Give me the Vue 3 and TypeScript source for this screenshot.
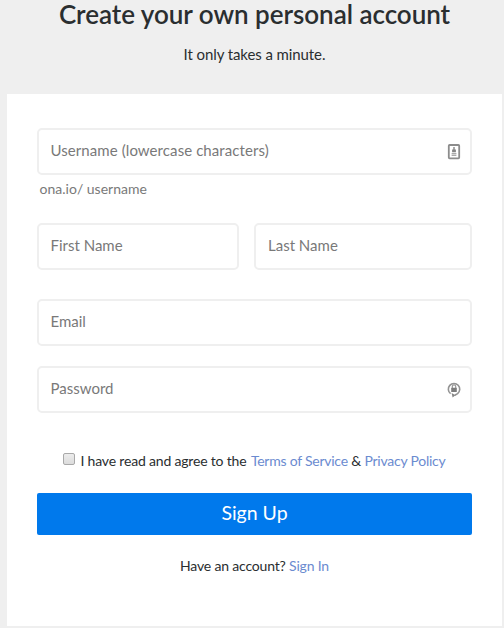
<script setup lang="ts">
import { reactive } from 'vue'

const form = reactive({
  username: '',
  firstName: '',
  lastName: '',
  email: '',
  password: '',
  agreed: false,
})
</script>

<template>
  <main class="page">
    <header class="intro">
      <h1 class="title">Create your own personal account</h1>
      <p class="subtitle">It only takes a minute.</p>
    </header>

    <form class="card" @submit.prevent>
      <div class="field">
        <input v-model="form.username" class="input wide" type="text" placeholder="Username (lowercase characters)" />
        <svg class="field-icon" viewBox="0 0 14 18" aria-hidden="true">
          <rect x="1.8" y="2" width="10.4" height="13.4" rx="0.8" fill="#fff" stroke="#8c8c8c" stroke-width="1.8" />
          <path d="M6.3 4h1.4v2.6h1.2v2.6H5.1V6.6h1.2z" fill="#858585" />
          <path d="M4.6 10.6h4.8M4.6 12.4h4.8" stroke="#aaa" stroke-width="1.4" />
        </svg>
      </div>
      <p class="hint">ona.io/ username</p>

      <div class="names">
        <input v-model="form.firstName" class="input" type="text" placeholder="First Name" />
        <input v-model="form.lastName" class="input last" type="text" placeholder="Last Name" />
      </div>

      <input v-model="form.email" class="input email" type="text" placeholder="Email" />

      <div class="field">
        <input v-model="form.password" class="input" type="password" placeholder="Password" />
        <svg class="field-icon" viewBox="0 0 14 18" aria-hidden="true">
          <path d="M3.6 12.7A5.7 5.7 0 1 1 10.6 12.6L7.8 14.2" fill="none" stroke="#939393" stroke-width="1.6" />
          <path d="M4.6 11.9 8.4 14.2 5.6 16.6z" fill="#848484" />
          <path d="M5.3 7.4V5.6a1.7 1.7 0 0 1 3.4 0v1.8" fill="none" stroke="#999" stroke-width="1.2" />
          <rect x="4.2" y="6.8" width="5.6" height="4.3" rx="0.4" fill="#7c7c7c" />
        </svg>
      </div>

      <div class="terms">
        <input id="agree" v-model="form.agreed" class="check" type="checkbox" />
        <label class="terms-text" for="agree">I have read and agree to the <a class="link" href="#">Terms of Service</a> &amp; <a class="link" href="#">Privacy Policy</a></label>
      </div>

      <button class="submit" type="submit">Sign Up</button>

      <p class="signin">Have an account? <a class="link" href="#">Sign In</a></p>
    </form>
  </main>
</template>

<style>
body {
  background: #efefef;
}
</style>

<style scoped>
.page {
  box-sizing: border-box;
  height: 628px;
  padding: 0 2px 2px 7px;
  background: #efefef;
  color: #2a2e30;
  font-family: Lato, 'Liberation Sans', sans-serif;
}

.intro {
  height: 94px;
  text-align: center;
}

.title {
  margin: 0;
  font-size: 26px;
  font-weight: 600;
  line-height: 28px;
  letter-spacing: -0.03px;
}

.subtitle {
  margin: 16px 0 0;
  font-size: 15px;
  line-height: 20px;
  letter-spacing: -0.09px;
}

.card {
  box-sizing: border-box;
  display: flex;
  flex-direction: column;
  height: 532px;
  padding: 34px 30px 0;
  background: #fff;
}

.field {
  position: relative;
  display: flex;
}

.field-icon {
  position: absolute;
  top: 15px;
  right: 11px;
  width: 14px;
  height: 18px;
}

.input {
  box-sizing: border-box;
  width: 100%;
  min-width: 0;
  height: 47px;
  margin: 0;
  padding: 0 12px 3px 11.5px;
  border: 2px solid #efefef;
  border-radius: 5px;
  background: #fff;
  color: #24282a;
  font-family: inherit;
  font-size: 15px;
  outline: none;
}

.input::placeholder {
  color: #797979;
  opacity: 1;
}

.wide {
  letter-spacing: 0.08px;
}

.last {
  padding-left: 12px;
}

.hint {
  margin: 4px 0 0 2.6px;
  color: #797979;
  font-size: 14px;
  line-height: 20px;
}

.names {
  display: grid;
  grid-template-columns: 202px 218px;
  column-gap: 15px;
  margin-top: 24px;
}

.email {
  flex: none;
  margin: 29px 0 20px;
}

.terms {
  display: flex;
  justify-content: center;
  height: 20px;
  margin-top: 38px;
}

.check {
  appearance: none;
  box-sizing: border-box;
  flex: none;
  width: 12px;
  height: 12px;
  margin: 2px 5px 0 0;
  border: 1px solid #a9a9a9;
  border-radius: 2px;
  background: linear-gradient(#ececec, #dcdcdc);
}

.check:checked {
  background: #0079ec;
}

.terms-text,
.signin {
  font-size: 14px;
  line-height: 20px;
  letter-spacing: -0.18px;
  white-space: nowrap;
}

.terms-text .link {
  letter-spacing: -0.24px;
}

.terms-text .link:first-child {
  margin-left: 1px;
}

.link {
  color: #6b8bd0;
  text-decoration: none;
}

.submit {
  flex: none;
  height: 42px;
  margin: 22px 0 0;
  padding: 0 0 2px;
  border: 0;
  border-radius: 2px;
  background: #0079ec;
  color: #fff;
  font-family: inherit;
  font-size: 19.5px;
  line-height: 40px;
}

.signin {
  margin: 21px 0 0;
  text-align: center;
}
</style>
